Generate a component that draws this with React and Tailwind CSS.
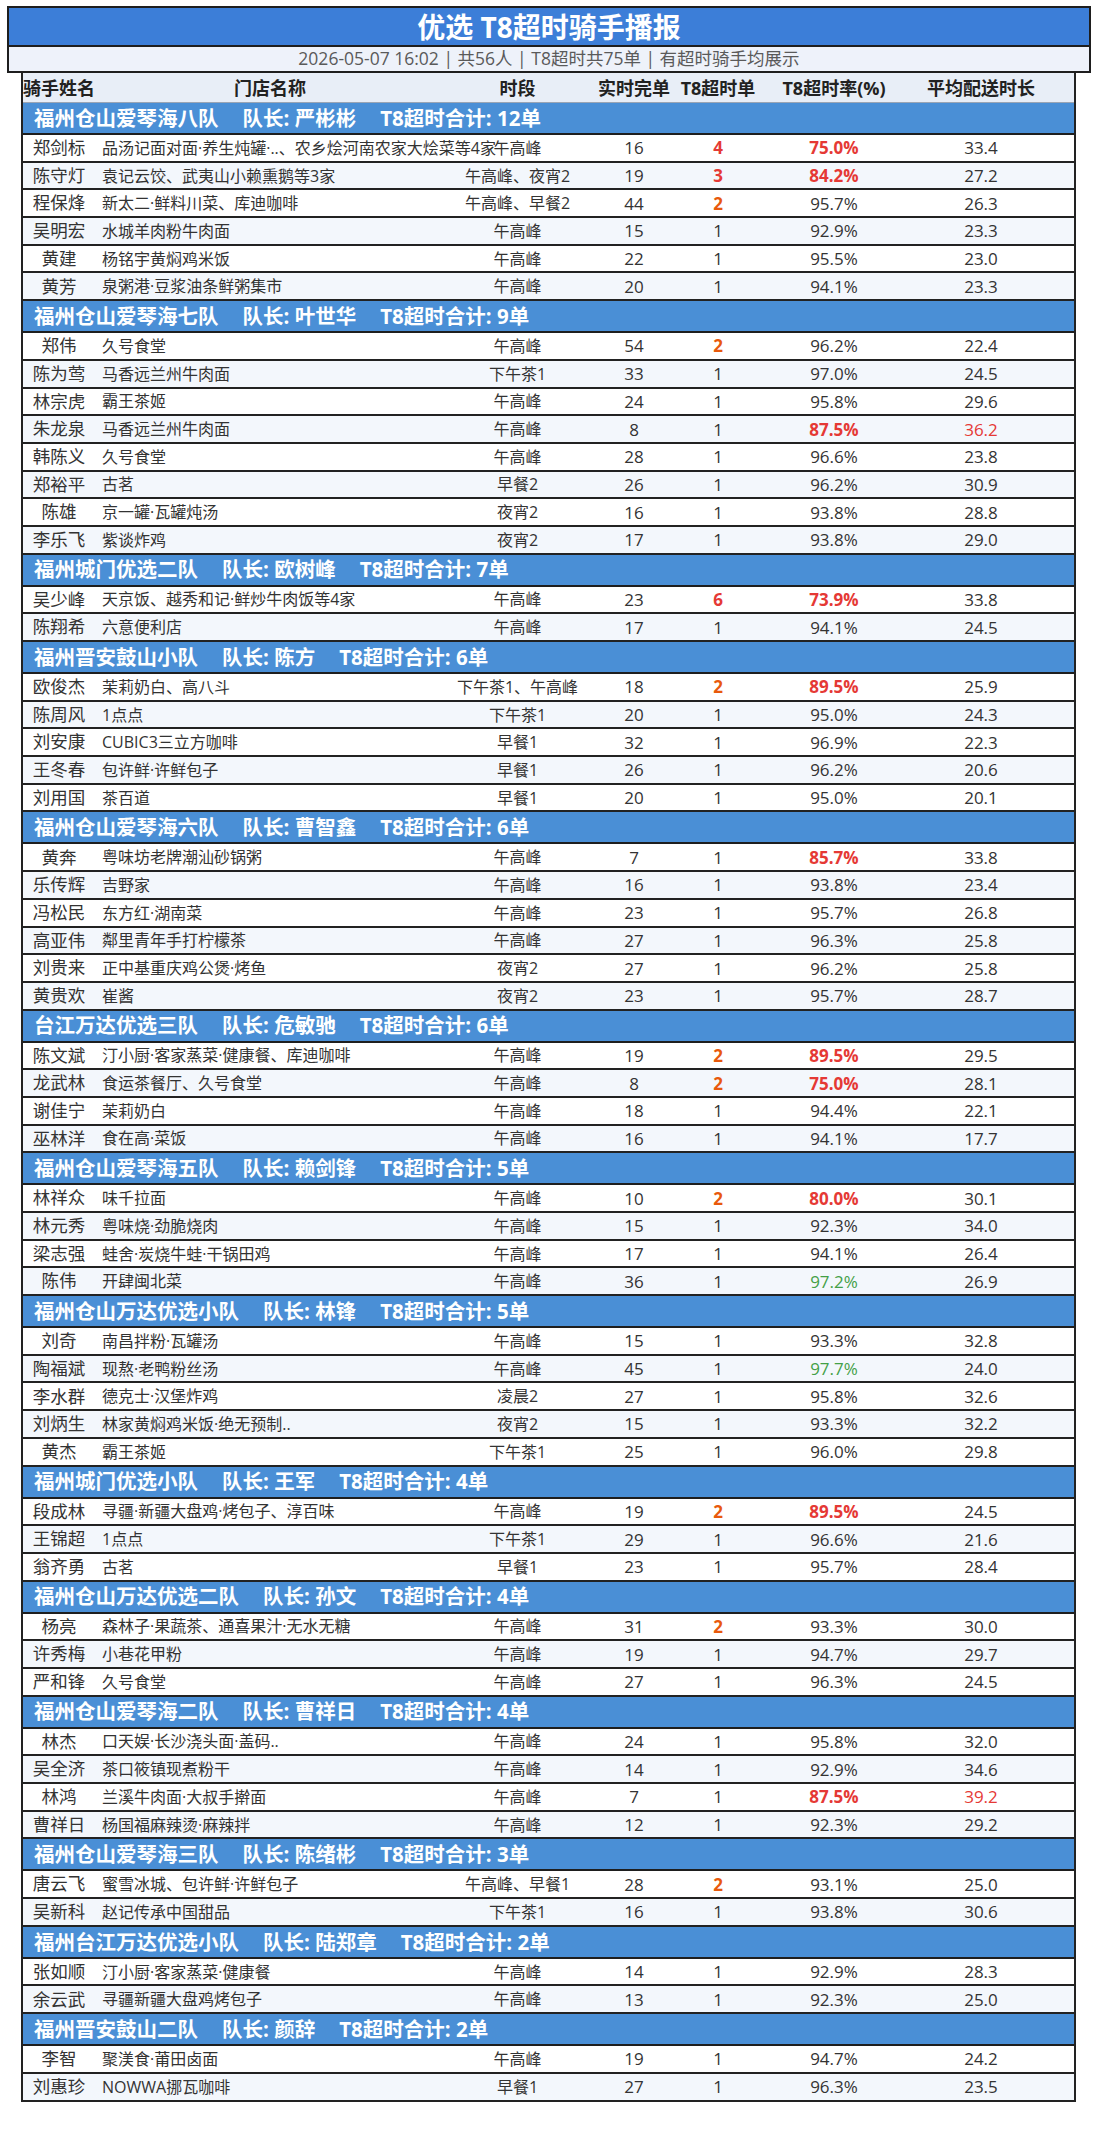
import React from 'react';

const teams = [
  {
    name: '福州仓山爱琴海八队', leader: '严彬彬', total: 12,
    rows: [
      ['郑剑标', '品汤记面对面·养生炖罐·..、农乡烩河南农家大烩菜等4家', '午高峰', 16, 4, 75.0, 33.4],
      ['陈守灯', '袁记云饺、武夷山小赖熏鹅等3家', '午高峰、夜宵2', 19, 3, 84.2, 27.2],
      ['程保烽', '新太二·鲜料川菜、库迪咖啡', '午高峰、早餐2', 44, 2, 95.7, 26.3],
      ['吴明宏', '水城羊肉粉牛肉面', '午高峰', 15, 1, 92.9, 23.3],
      ['黄建', '杨铭宇黄焖鸡米饭', '午高峰', 22, 1, 95.5, 23.0],
      ['黄芳', '泉粥港·豆浆油条鲜粥集市', '午高峰', 20, 1, 94.1, 23.3],
    ],
  },
  {
    name: '福州仓山爱琴海七队', leader: '叶世华', total: 9,
    rows: [
      ['郑伟', '久号食堂', '午高峰', 54, 2, 96.2, 22.4],
      ['陈为莺', '马香远兰州牛肉面', '下午茶1', 33, 1, 97.0, 24.5],
      ['林宗虎', '霸王茶姬', '午高峰', 24, 1, 95.8, 29.6],
      ['朱龙泉', '马香远兰州牛肉面', '午高峰', 8, 1, 87.5, 36.2],
      ['韩陈义', '久号食堂', '午高峰', 28, 1, 96.6, 23.8],
      ['郑裕平', '古茗', '早餐2', 26, 1, 96.2, 30.9],
      ['陈雄', '京一罐·瓦罐炖汤', '夜宵2', 16, 1, 93.8, 28.8],
      ['李乐飞', '紫谈炸鸡', '夜宵2', 17, 1, 93.8, 29.0],
    ],
  },
  {
    name: '福州城门优选二队', leader: '欧树峰', total: 7,
    rows: [
      ['吴少峰', '天京饭、越秀和记·鲜炒牛肉饭等4家', '午高峰', 23, 6, 73.9, 33.8],
      ['陈翔希', '六意便利店', '午高峰', 17, 1, 94.1, 24.5],
    ],
  },
  {
    name: '福州晋安鼓山小队', leader: '陈方', total: 6,
    rows: [
      ['欧俊杰', '茉莉奶白、高八斗', '下午茶1、午高峰', 18, 2, 89.5, 25.9],
      ['陈周风', '1点点', '下午茶1', 20, 1, 95.0, 24.3],
      ['刘安康', 'CUBIC3三立方咖啡', '早餐1', 32, 1, 96.9, 22.3],
      ['王冬春', '包许鲜·许鲜包子', '早餐1', 26, 1, 96.2, 20.6],
      ['刘用国', '茶百道', '早餐1', 20, 1, 95.0, 20.1],
    ],
  },
  {
    name: '福州仓山爱琴海六队', leader: '曹智鑫', total: 6,
    rows: [
      ['黄奔', '粤味坊老牌潮汕砂锅粥', '午高峰', 7, 1, 85.7, 33.8],
      ['乐传辉', '吉野家', '午高峰', 16, 1, 93.8, 23.4],
      ['冯松民', '东方红·湖南菜', '午高峰', 23, 1, 95.7, 26.8],
      ['高亚伟', '鄰里青年手打柠檬茶', '午高峰', 27, 1, 96.3, 25.8],
      ['刘贵来', '正中基重庆鸡公煲·烤鱼', '夜宵2', 27, 1, 96.2, 25.8],
      ['黄贵欢', '崔酱', '夜宵2', 23, 1, 95.7, 28.7],
    ],
  },
  {
    name: '台江万达优选三队', leader: '危敏驰', total: 6,
    rows: [
      ['陈文斌', '汀小厨·客家蒸菜·健康餐、库迪咖啡', '午高峰', 19, 2, 89.5, 29.5],
      ['龙武林', '食运茶餐厅、久号食堂', '午高峰', 8, 2, 75.0, 28.1],
      ['谢佳宁', '茉莉奶白', '午高峰', 18, 1, 94.4, 22.1],
      ['巫林洋', '食在高·菜饭', '午高峰', 16, 1, 94.1, 17.7],
    ],
  },
  {
    name: '福州仓山爱琴海五队', leader: '赖剑锋', total: 5,
    rows: [
      ['林祥众', '味千拉面', '午高峰', 10, 2, 80.0, 30.1],
      ['林元秀', '粤味烧·劲脆烧肉', '午高峰', 15, 1, 92.3, 34.0],
      ['梁志强', '蛙舍·炭烧牛蛙·干锅田鸡', '午高峰', 17, 1, 94.1, 26.4],
      ['陈伟', '开肆闽北菜', '午高峰', 36, 1, 97.2, 26.9],
    ],
  },
  {
    name: '福州仓山万达优选小队', leader: '林锋', total: 5,
    rows: [
      ['刘奇', '南昌拌粉·瓦罐汤', '午高峰', 15, 1, 93.3, 32.8],
      ['陶福斌', '现熬·老鸭粉丝汤', '午高峰', 45, 1, 97.7, 24.0],
      ['李水群', '德克士·汉堡炸鸡', '凌晨2', 27, 1, 95.8, 32.6],
      ['刘炳生', '林家黄焖鸡米饭·绝无预制..', '夜宵2', 15, 1, 93.3, 32.2],
      ['黄杰', '霸王茶姬', '下午茶1', 25, 1, 96.0, 29.8],
    ],
  },
  {
    name: '福州城门优选小队', leader: '王军', total: 4,
    rows: [
      ['段成林', '寻疆·新疆大盘鸡·烤包子、淳百味', '午高峰', 19, 2, 89.5, 24.5],
      ['王锦超', '1点点', '下午茶1', 29, 1, 96.6, 21.6],
      ['翁齐勇', '古茗', '早餐1', 23, 1, 95.7, 28.4],
    ],
  },
  {
    name: '福州仓山万达优选二队', leader: '孙文', total: 4,
    rows: [
      ['杨亮', '森林子·果蔬茶、通喜果汁·无水无糖', '午高峰', 31, 2, 93.3, 30.0],
      ['许秀梅', '小巷花甲粉', '午高峰', 19, 1, 94.7, 29.7],
      ['严和锋', '久号食堂', '午高峰', 27, 1, 96.3, 24.5],
    ],
  },
  {
    name: '福州仓山爱琴海二队', leader: '曹祥日', total: 4,
    rows: [
      ['林杰', '口天娱·长沙浇头面·盖码..', '午高峰', 24, 1, 95.8, 32.0],
      ['吴全济', '茶口筱镇现煮粉干', '午高峰', 14, 1, 92.9, 34.6],
      ['林鸿', '兰溪牛肉面·大叔手擀面', '午高峰', 7, 1, 87.5, 39.2],
      ['曹祥日', '杨国福麻辣烫·麻辣拌', '午高峰', 12, 1, 92.3, 29.2],
    ],
  },
  {
    name: '福州仓山爱琴海三队', leader: '陈绪彬', total: 3,
    rows: [
      ['唐云飞', '蜜雪冰城、包许鲜·许鲜包子', '午高峰、早餐1', 28, 2, 93.1, 25.0],
      ['吴新科', '赵记传承中国甜品', '下午茶1', 16, 1, 93.8, 30.6],
    ],
  },
  {
    name: '福州台江万达优选小队', leader: '陆郑章', total: 2,
    rows: [
      ['张如顺', '汀小厨·客家蒸菜·健康餐', '午高峰', 14, 1, 92.9, 28.3],
      ['余云武', '寻疆新疆大盘鸡烤包子', '午高峰', 13, 1, 92.3, 25.0],
    ],
  },
  {
    name: '福州晋安鼓山二队', leader: '颜辞', total: 2,
    rows: [
      ['李智', '聚渼食·莆田卤面', '午高峰', 19, 1, 94.7, 24.2],
      ['刘惠珍', 'NOWWA挪瓦咖啡', '早餐1', 27, 1, 96.3, 23.5],
    ],
  },
];

// shared column grid for header and rows
const cols = 'grid grid-cols-[72px_350px_145px_88px_80px_152px_142px]';

const t8Color = (n) => {
  if (n >= 3) return 'text-[#e53935] font-bold';
  if (n === 2) return 'text-[#e8590c] font-bold';
  return '';
};

const rateColor = (r) => {
  if (r < 90) return 'text-[#e53935] font-bold';
  if (r > 97) return 'text-[#43a047]';
  return '';
};

const avgColor = (a) => (a > 35 ? 'text-[#e53935]' : '');

function RiderRow({ row, idx }) {
  const [name, store, period, done, t8, rate, avg] = row;
  const bg = idx % 2 === 0 ? 'bg-white' : 'bg-[#f3f7fc]';
  return (
    <div className={`${cols} ${bg} h-[27.7px] items-center border-b-2 border-[#222] text-[#333] leading-none`}>
      <div className="text-center text-[17.5px]">{name}</div>
      <div className="pl-[7px] text-[16px] whitespace-nowrap">{store}</div>
      <div className="text-center text-[16px] whitespace-nowrap">{period}</div>
      <div className="text-center text-[17px]">{done}</div>
      <div className={`text-center text-[17px] ${t8Color(t8)}`}>{t8}</div>
      <div className={`text-center text-[17px] ${rateColor(rate)}`}>{rate.toFixed(1)}%</div>
      <div className={`text-center text-[17px] ${avgColor(avg)}`}>{avg.toFixed(1)}</div>
    </div>
  );
}

function TeamBlock({ team }) {
  return (
    <>
      <div className="h-[32px] bg-[#4a8fd6] border-b-2 border-[#1e1e1e] pl-[11px] flex items-center gap-[24px] text-white font-bold text-[20.5px] leading-none whitespace-nowrap">
        <span>{team.name}</span>
        <span>队长: {team.leader}</span>
        <span>T8超时合计: {team.total}单</span>
      </div>
      {team.rows.map((r, i) => (
        <RiderRow key={r[0]} row={r} idx={i} />
      ))}
    </>
  );
}

export default function App() {
  return (
    <div className="w-[1098px] min-h-[2150px] bg-white pt-[6px] font-['Open_Sans','Noto_Sans_CJK_SC',sans-serif]">
      {/* title box */}
      <div className="ml-[7px] w-[1084px] border-2 border-[#1e1e1e]">
        <div className="h-[39px] bg-[#3c7ed8] border-b-2 border-[#1e1e1e] flex items-center justify-center text-white font-bold text-[28px] leading-none">
          优选 T8超时骑手播报
        </div>
        <div className="h-[24px] bg-[#eef2fa] flex items-center justify-center text-[#5a5a5a] text-[17.5px] leading-none whitespace-nowrap">
          2026-05-07 16:02 | 共56人 | T8超时共75单 | 有超时骑手均展示
        </div>
      </div>

      {/* table */}
      <div className="ml-[21px] w-[1055px] border-x-2 border-[#222]">
        <div className={`${cols} h-[30px] items-center bg-[#e8eef7] border-b border-[#9aa5b5] font-bold text-[18px] text-[#222] leading-none whitespace-nowrap`}>
          <div className="text-center">骑手姓名</div>
          <div className="text-center">门店名称</div>
          <div className="text-center">时段</div>
          <div className="text-center">实时完单</div>
          <div className="text-center">T8超时单</div>
          <div className="text-center">T8超时率(%)</div>
          <div className="text-center">平均配送时长</div>
        </div>
        {teams.map((t) => (
          <TeamBlock key={t.name} team={t} />
        ))}
      </div>
    </div>
  );
}
